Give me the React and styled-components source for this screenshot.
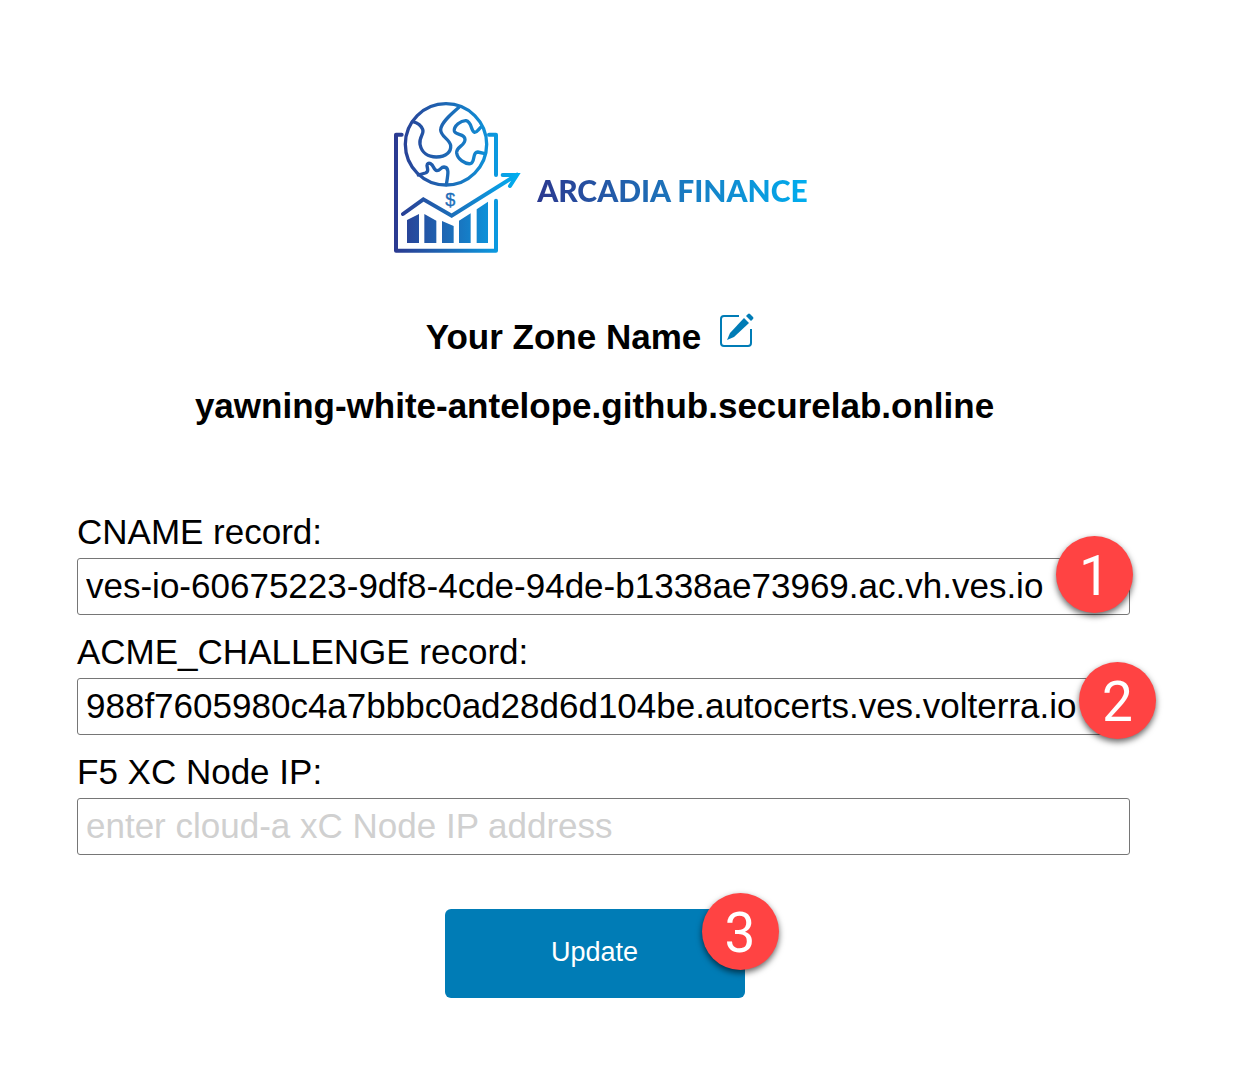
import React from "react";
import styled, { createGlobalStyle } from "styled-components";

const GlobalStyle = createGlobalStyle`
  * { box-sizing: border-box; }
  body {
    margin: 0;
    background: #fff;
    color: #000;
    font-family: "Liberation Sans", Arial, sans-serif;
    font-size: 35px;
    line-height: 40px;
  }
`;

const Page = styled.main`
  display: flex;
  flex-direction: column;
  padding: 95px 121px 72px 77px;
`;

const Brand = styled.div`
  display: flex;
  justify-content: center;
  align-items: center;
  gap: 12px;
  padding-left: 4px;
`;

const BrandMark = styled.svg`
  width: 140px;
  height: 165px;
  flex: none;
`;

const BrandName = styled.span`
  margin-top: 24px;
  font-family: Lato, sans-serif;
  font-size: 30px;
  font-weight: 900;
  white-space: nowrap;
  color: transparent;
  background: linear-gradient(90deg, #2b3990, #1c75bc 50%, #00aeef);
  background-clip: text;
`;

const Heading = styled.h1`
  display: flex;
  justify-content: center;
  gap: 18px;
  margin: 57px 0 29px;
  padding-right: 8px;
  font-size: 35px;
  line-height: 40px;
`;

const EditButton = styled.button`
  display: flex;
  width: 36px;
  height: 36px;
  margin-top: -5px;
  padding: 0;
  border: 0;
  background: none;
  color: #007cb6;
  cursor: pointer;
`;

const ZoneName = styled.h2`
  margin: 0 0 86px;
  font-size: 35px;
  line-height: 40px;
  text-align: center;
`;

const Form = styled.form`
  display: flex;
  flex-direction: column;
  gap: 17px;
`;

const Field = styled.div`
  position: relative;
  display: flex;
  flex-direction: column;
  gap: 6px;
  margin-right: -18px;
`;

const Input = styled.input`
  width: 100%;
  height: 57px;
  padding: 0 8px 2px;
  border: 1px solid #767676;
  border-radius: 3px;
  background: #fff;
  color: #000;
  font: inherit;

  &::placeholder {
    color: #d0d0d0;
    opacity: 1;
  }
`;

const Actions = styled.div`
  position: relative;
  align-self: center;
  margin-top: 37px;
`;

const SubmitButton = styled.button`
  width: 300px;
  height: 89px;
  padding: 0 0 2px;
  border: 0;
  border-radius: 6px;
  background: #007cb6;
  color: #fff;
  font-family: inherit;
  font-size: 27px;
  cursor: pointer;
`;

const Badge = styled.span`
  position: absolute;
  top: ${(p) => p.$top}px;
  right: ${(p) => p.$right}px;
  width: 77px;
  height: 77px;
  padding-top: 2px;
  border-radius: 50%;
  background: #ff4343;
  box-shadow: 0 3px 6px rgba(0, 0, 0, 0.6);
  color: #fff;
  font-family: Roboto, sans-serif;
  font-size: 55px;
  line-height: 77px;
  text-align: center;
`;

const fields = [
  {
    id: "cname",
    label: "CNAME record:",
    value: "ves-io-60675223-9df8-4cde-94de-b1338ae73969.ac.vh.ves.io",
    badge: { text: "1", top: 24, right: -3 },
  },
  {
    id: "acme",
    label: "ACME_CHALLENGE record:",
    value: "988f7605980c4a7bbbc0ad28d6d104be.autocerts.ves.volterra.io",
    badge: { text: "2", top: 30, right: -26 },
  },
  {
    id: "node-ip",
    label: "F5 XC Node IP:",
    placeholder: "enter cloud-a xC Node IP address",
  },
];

function Logo() {
  return (
    <BrandMark viewBox="0 0 420 495" fill="none" aria-hidden="true">
      <defs>
        <linearGradient id="brand" gradientUnits="userSpaceOnUse" x1="28" y1="0" x2="398" y2="0">
          <stop offset="0" stopColor="#2b3990" />
          <stop offset="0.45" stopColor="#1c6cb8" />
          <stop offset="0.85" stopColor="#0a9ce2" />
          <stop offset="1" stopColor="#00aeef" />
        </linearGradient>
      </defs>
      <g stroke="url(#brand)" strokeWidth="10" strokeLinecap="round" strokeLinejoin="round">
        <circle cx="183" cy="148" r="122" />
        <path d="M84 80C98 84 108 91 113 103C119 117 101 125 105 148C110 174 130 186 154 186C184 186 199 170 197 151C193 131 168 126 167 105C167 85 194 61 222 37" />
        <path d="M290 95C281 101 277 112 269 112C256 108 262 81 243 77C228 76 206 93 208 108C211 122 239 114 240 133C241 153 213 154 215 174C218 193 240 208 256 206C272 201 261 171 278 171L300 176" />
        <path d="M100 240L121 234Q129 231 128 223L126 212Q127 202 137 206C147 211 145 226 156 227C166 227 167 216 177 216C194 217 189 238 184 269" />
        <path d="M50 119H33V467H333V317M312 119H333V240" strokeWidth="12" />
        <path d="M54 357L115 313L200 362L396 239M353 240H396L375 273" strokeWidth="12" strokeLinejoin="miter" />
      </g>
      <path
        fill="url(#brand)"
        d="M66 375L102 357V444H66ZM118 357L154 377V444H118ZM171 378L206 393V444H171ZM222 377L257 355V444H222ZM275 343L309 320V444H275Z"
      />
      <text x="196" y="332" textAnchor="middle" fontFamily="Liberation Sans, sans-serif" fontSize="54" fill="url(#brand)" stroke="url(#brand)" strokeWidth="1">
        $
      </text>
    </BrandMark>
  );
}

function EditIcon() {
  return (
    <svg width="36" height="36" viewBox="0 0 36 36" fill="none" aria-hidden="true">
      <path d="M20 4H5Q2 4 2 7V31Q2 34 5 34H29Q32 34 32 31V17" stroke="currentColor" strokeWidth="2" />
      <path d="M25 6L30 11L15 25L8 28L11 21Z" fill="currentColor" />
      <path d="M27 4L29 2Q30 1 31 2L34 5Q35 6 34 7L32 9Z" fill="currentColor" />
    </svg>
  );
}

export default function App() {
  return (
    <>
      <GlobalStyle />
      <Page>
        <Brand>
          <Logo />
          <BrandName>ARCADIA FINANCE</BrandName>
        </Brand>
        <Heading>
          Your Zone Name
          <EditButton type="button" aria-label="Edit zone name">
            <EditIcon />
          </EditButton>
        </Heading>
        <ZoneName>yawning-white-antelope.github.securelab.online</ZoneName>
        <Form onSubmit={(e) => e.preventDefault()}>
          {fields.map(({ id, label, value, placeholder, badge }) => (
            <Field key={id}>
              <label htmlFor={id}>{label}</label>
              <Input id={id} type="text" defaultValue={value} placeholder={placeholder} spellCheck={false} />
              {badge && (
                <Badge $top={badge.top} $right={badge.right}>
                  {badge.text}
                </Badge>
              )}
            </Field>
          ))}
          <Actions>
            <SubmitButton type="submit">Update</SubmitButton>
            <Badge $top={-16} $right={-34}>3</Badge>
          </Actions>
        </Form>
      </Page>
    </>
  );
}
